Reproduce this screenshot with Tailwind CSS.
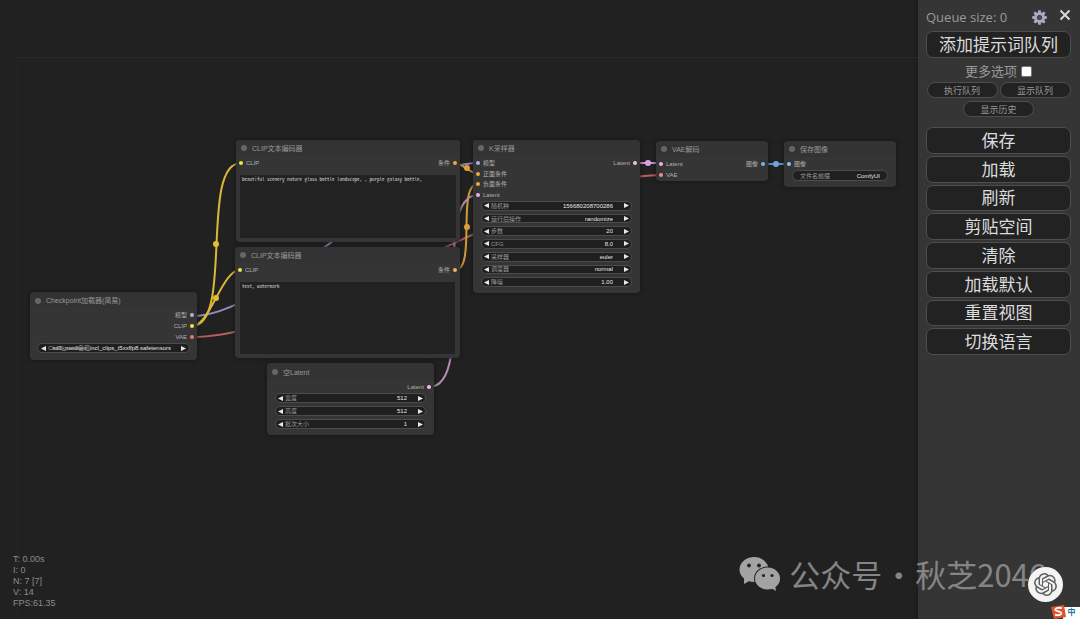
<!DOCTYPE html>
<html lang="zh-CN">
<head>
<meta charset="utf-8">
<title>ComfyUI</title>
<script src="https://cdn.jsdelivr.net/npm/@tailwindcss/browser@4"></script>
</head>
<body class="relative flex min-h-screen overflow-hidden bg-[#212121] font-['Liberation_Sans','Noto_Sans_CJK_SC',sans-serif] text-[#b0b0b0]">

<svg class="hidden">
  <symbol id="prev" viewBox="0 0 6 6"><path d="M6 0v6L0 3z" fill="#e6e6e6"/></symbol>
  <symbol id="next" viewBox="0 0 6 6"><path d="M0 0v6l6-3z" fill="#e6e6e6"/></symbol>
</svg>

<!-- Node graph canvas -->
<main class="relative min-w-0 flex-1 overflow-hidden">
  <div class="absolute top-[57px] right-0 bottom-0 left-[17px] border-t border-l border-t-[#25273a] border-l-[#262626]"></div>

  <svg class="absolute top-0 left-0 h-[619px] w-[919px]" viewBox="0 0 919 619" fill="none" stroke-width="2">
    <path d="M192 316C273 316 397 163 478 163" stroke="#8f8bb8"/>
    <path d="M192 326C234 326 199 163 241 163" stroke="#dcb83a"/>
    <path d="M192 326C210 326 222 270 240 270" stroke="#dcb83a"/>
    <path d="M192 337C316 337 537 175 661 175" stroke="#b5605c"/>
    <path d="M455 163C461 163 472 174 478 174" stroke="#d19a38"/>
    <path d="M455 270C477 270 456 184 478 184" stroke="#d19a38"/>
    <path d="M429 387C479 387 428 195 478 195" stroke="#b58ab5"/>
    <path d="M635 163H661" stroke="#c895d0"/>
    <path d="M763 164H789" stroke="#6294c8"/>
    <circle cx="216" cy="244" r="3" fill="#e3bf31"/>
    <circle cx="216" cy="298" r="3" fill="#e3bf31"/>
    <circle cx="467" cy="168" r="3" fill="#dba03a"/>
    <circle cx="467" cy="227" r="3" fill="#dba03a"/>
    <circle cx="648" cy="163" r="3" fill="#dba0e2"/>
    <circle cx="776" cy="164" r="3" fill="#6fa4da"/>
  </svg>

  <!-- Checkpoint loader -->
  <section class="absolute top-[292px] left-[30px] w-[167px] rounded bg-[#353535] pb-[7px] shadow-[0_0_4px_#141414]">
    <h2 class="flex h-[17px] items-center gap-[5px] rounded-t bg-[#333] pl-[5px] text-[7px] leading-none text-[#999]"><i class="size-[6px] rounded-full bg-[#666]"></i>Checkpoint加载器(简易)</h2>
    <ul class="grid auto-rows-[11px] pr-[3px] text-[6px] leading-none">
      <li class="flex items-center justify-end gap-[3px]">模型<i class="size-[4px] rounded-full bg-[#b4b0dd]"></i></li>
      <li class="flex items-center justify-end gap-[3px]">CLIP<i class="size-[4px] rounded-full bg-[#f5e04a]"></i></li>
      <li class="flex items-center justify-end gap-[3px]">VAE<i class="size-[4px] rounded-full bg-[#e87570]"></i></li>
    </ul>
    <div class="relative mx-[7px] mt-[1px] flex h-[10px] items-center rounded-full border border-[#4b4b4b] bg-[#1f1f1f] px-[3px] text-[6px] leading-none">
      <button type="button" aria-label="上一个"><svg class="size-[5px]"><use href="#prev"/></svg></button>
      <label for="ckpt" class="absolute left-[10px] text-[#999]">Checkpoint名称</label>
      <select id="ckpt" class="min-w-0 flex-1 appearance-none pr-[10px] text-[#e6e6e6] [text-align-last:right]"><option>sd3_medium_incl_clips_t5xxlfp8.safetensors</option></select>
      <button type="button" aria-label="下一个"><svg class="size-[5px]"><use href="#next"/></svg></button>
    </div>
  </section>

  <!-- Positive prompt -->
  <section class="absolute top-[140px] left-[236px] w-[224px] rounded bg-[#353535] pb-[4px] shadow-[0_0_4px_#141414]">
    <h2 class="flex h-[16px] items-center gap-[5px] rounded-t bg-[#333] pl-[5px] text-[7px] leading-none text-[#999]"><i class="size-[6px] rounded-full bg-[#666]"></i>CLIP文本编码器</h2>
    <div class="flex h-[14px] items-center justify-between px-[3px] text-[6px] leading-none">
      <span class="flex items-center gap-[3px]"><i class="size-[4px] rounded-full bg-[#f5e04a]"></i>CLIP</span>
      <span class="flex items-center gap-[3px]">条件<i class="size-[4px] rounded-full bg-[#f0a840]"></i></span>
    </div>
    <textarea aria-label="正向提示词" class="mx-[4px] mt-[5px] block h-[63px] w-[216px] resize-none bg-[#222] px-[2px] py-[1px] font-['Noto_Sans_Mono_CJK_SC','Liberation_Mono',monospace] text-[5px] leading-[6px] text-[#d5d5d5]">beautiful scenery nature glass bottle landscape, , purple galaxy bottle,</textarea>
  </section>

  <!-- Negative prompt -->
  <section class="absolute top-[247px] left-[235px] w-[225px] rounded bg-[#353535] pb-[4px] shadow-[0_0_4px_#141414]">
    <h2 class="flex h-[16px] items-center gap-[5px] rounded-t bg-[#333] pl-[5px] text-[7px] leading-none text-[#999]"><i class="size-[6px] rounded-full bg-[#666]"></i>CLIP文本编码器</h2>
    <div class="flex h-[14px] items-center justify-between px-[3px] text-[6px] leading-none">
      <span class="flex items-center gap-[3px]"><i class="size-[4px] rounded-full bg-[#f5e04a]"></i>CLIP</span>
      <span class="flex items-center gap-[3px]">条件<i class="size-[4px] rounded-full bg-[#f0b060]"></i></span>
    </div>
    <textarea aria-label="反向提示词" class="mx-[5px] mt-[5px] block h-[72px] w-[215px] resize-none bg-[#222] px-[2px] py-[1px] font-['Noto_Sans_Mono_CJK_SC','Liberation_Mono',monospace] text-[5px] leading-[6px] text-[#d5d5d5]">text, watermark</textarea>
  </section>

  <!-- Empty latent -->
  <section class="absolute top-[363px] left-[267px] w-[167px] rounded bg-[#353535] pb-[6px] shadow-[0_0_4px_#141414]">
    <h2 class="flex h-[18px] items-center gap-[5px] rounded-t bg-[#333] pl-[5px] text-[7px] leading-none text-[#999]"><i class="size-[6px] rounded-full bg-[#666]"></i>空Latent</h2>
    <div class="flex h-[12px] items-center justify-end gap-[3px] pr-[3px] text-[6px] leading-none">Latent<i class="size-[4px] rounded-full bg-[#eac0ee]"></i></div>
    <div class="mx-[8px] grid auto-rows-[10px] gap-[3px] text-[6px] leading-none text-[#999]">
      <div class="flex items-center gap-[2px] rounded-full border border-[#4b4b4b] bg-[#1f1f1f] px-[2px]">
        <button type="button" aria-label="减小宽度"><svg class="size-[5px]"><use href="#prev"/></svg></button><label for="w">宽度</label>
        <input id="w" value="512" class="min-w-0 flex-1 pr-[9px] text-right text-[#e6e6e6]"><button type="button" aria-label="增大宽度"><svg class="size-[5px]"><use href="#next"/></svg></button>
      </div>
      <div class="flex items-center gap-[2px] rounded-full border border-[#4b4b4b] bg-[#1f1f1f] px-[2px]">
        <button type="button" aria-label="减小高度"><svg class="size-[5px]"><use href="#prev"/></svg></button><label for="h">高度</label>
        <input id="h" value="512" class="min-w-0 flex-1 pr-[9px] text-right text-[#e6e6e6]"><button type="button" aria-label="增大高度"><svg class="size-[5px]"><use href="#next"/></svg></button>
      </div>
      <div class="flex items-center gap-[2px] rounded-full border border-[#4b4b4b] bg-[#1f1f1f] px-[2px]">
        <button type="button" aria-label="减小批次"><svg class="size-[5px]"><use href="#prev"/></svg></button><label for="b">批次大小</label>
        <input id="b" value="1" class="min-w-0 flex-1 pr-[9px] text-right text-[#e6e6e6]"><button type="button" aria-label="增大批次"><svg class="size-[5px]"><use href="#next"/></svg></button>
      </div>
    </div>
  </section>

  <!-- K sampler -->
  <section class="absolute top-[140px] left-[473px] w-[167px] rounded bg-[#353535] pb-[6px] shadow-[0_0_4px_#141414]">
    <h2 class="flex h-[16px] items-center gap-[5px] rounded-t bg-[#333] pl-[5px] text-[7px] leading-none text-[#999]"><i class="size-[6px] rounded-full bg-[#666]"></i>K采样器</h2>
    <div class="flex justify-between px-[3px] pt-[2px] pb-[1px] text-[6px] leading-none">
      <ul class="grid h-[42px] auto-rows-fr">
        <li class="flex items-center gap-[3px]"><i class="size-[4px] rounded-full bg-[#b4b0dd]"></i>模型</li>
        <li class="flex items-center gap-[3px]"><i class="size-[4px] rounded-full bg-[#f0a840]"></i>正面条件</li>
        <li class="flex items-center gap-[3px]"><i class="size-[4px] rounded-full bg-[#f0a840]"></i>负面条件</li>
        <li class="flex items-center gap-[3px]"><i class="size-[4px] rounded-full bg-[#eab0f0]"></i>Latent</li>
      </ul>
      <div class="flex h-[10px] items-center gap-[3px]">Latent<i class="size-[4px] rounded-full bg-[#eac0ee]"></i></div>
    </div>
    <div class="mx-[8px] grid h-[86px] auto-rows-fr gap-[3px] text-[6px] leading-none text-[#999]">
      <div class="flex items-center gap-[2px] rounded-full border border-[#4b4b4b] bg-[#1f1f1f] px-[2px]">
        <button type="button" aria-label="减小"><svg class="size-[5px]"><use href="#prev"/></svg></button><label for="seed">随机种</label>
        <input id="seed" value="156680208700286" class="min-w-0 flex-1 pr-[9px] text-right text-[#e6e6e6]"><button type="button" aria-label="增大"><svg class="size-[5px]"><use href="#next"/></svg></button>
      </div>
      <div class="flex items-center gap-[2px] rounded-full border border-[#4b4b4b] bg-[#1f1f1f] px-[2px]">
        <button type="button" aria-label="上一个"><svg class="size-[5px]"><use href="#prev"/></svg></button><label for="after">运行后操作</label>
        <select id="after" class="min-w-0 flex-1 appearance-none pr-[9px] text-[#e6e6e6] [text-align-last:right]"><option>randomize</option></select><button type="button" aria-label="下一个"><svg class="size-[5px]"><use href="#next"/></svg></button>
      </div>
      <div class="flex items-center gap-[2px] rounded-full border border-[#4b4b4b] bg-[#1f1f1f] px-[2px]">
        <button type="button" aria-label="减小"><svg class="size-[5px]"><use href="#prev"/></svg></button><label for="steps">步数</label>
        <input id="steps" value="20" class="min-w-0 flex-1 pr-[9px] text-right text-[#e6e6e6]"><button type="button" aria-label="增大"><svg class="size-[5px]"><use href="#next"/></svg></button>
      </div>
      <div class="flex items-center gap-[2px] rounded-full border border-[#4b4b4b] bg-[#1f1f1f] px-[2px]">
        <button type="button" aria-label="减小"><svg class="size-[5px]"><use href="#prev"/></svg></button><label for="cfg">CFG</label>
        <input id="cfg" value="8.0" class="min-w-0 flex-1 pr-[9px] text-right text-[#e6e6e6]"><button type="button" aria-label="增大"><svg class="size-[5px]"><use href="#next"/></svg></button>
      </div>
      <div class="flex items-center gap-[2px] rounded-full border border-[#4b4b4b] bg-[#1f1f1f] px-[2px]">
        <button type="button" aria-label="上一个"><svg class="size-[5px]"><use href="#prev"/></svg></button><label for="sampler">采样器</label>
        <select id="sampler" class="min-w-0 flex-1 appearance-none pr-[9px] text-[#e6e6e6] [text-align-last:right]"><option>euler</option></select><button type="button" aria-label="下一个"><svg class="size-[5px]"><use href="#next"/></svg></button>
      </div>
      <div class="flex items-center gap-[2px] rounded-full border border-[#4b4b4b] bg-[#1f1f1f] px-[2px]">
        <button type="button" aria-label="上一个"><svg class="size-[5px]"><use href="#prev"/></svg></button><label for="sched">调度器</label>
        <select id="sched" class="min-w-0 flex-1 appearance-none pr-[9px] text-[#e6e6e6] [text-align-last:right]"><option>normal</option></select><button type="button" aria-label="下一个"><svg class="size-[5px]"><use href="#next"/></svg></button>
      </div>
      <div class="flex items-center gap-[2px] rounded-full border border-[#4b4b4b] bg-[#1f1f1f] px-[2px]">
        <button type="button" aria-label="减小"><svg class="size-[5px]"><use href="#prev"/></svg></button><label for="denoise">降噪</label>
        <input id="denoise" value="1.00" class="min-w-0 flex-1 pr-[9px] text-right text-[#e6e6e6]"><button type="button" aria-label="增大"><svg class="size-[5px]"><use href="#next"/></svg></button>
      </div>
    </div>
  </section>

  <!-- VAE decode -->
  <section class="absolute top-[141px] left-[656px] w-[112px] rounded bg-[#353535] pb-[1px] shadow-[0_0_4px_#141414]">
    <h2 class="flex h-[16px] items-center gap-[5px] rounded-t bg-[#333] pl-[5px] text-[7px] leading-none text-[#999]"><i class="size-[6px] rounded-full bg-[#666]"></i>VAE解码</h2>
    <div class="flex justify-between px-[3px] pt-[1px] text-[6px] leading-none">
      <ul class="grid auto-rows-[11px]">
        <li class="flex items-center gap-[3px]"><i class="size-[4px] rounded-full bg-[#eab0f0]"></i>Latent</li>
        <li class="flex items-center gap-[3px]"><i class="size-[4px] rounded-full bg-[#ee8f88]"></i>VAE</li>
      </ul>
      <div class="flex h-[11px] items-center gap-[3px]">图像<i class="size-[4px] rounded-full bg-[#7db4ee]"></i></div>
    </div>
  </section>

  <!-- Save image -->
  <section class="absolute top-[141px] left-[784px] w-[112px] rounded bg-[#353535] pb-[6px] shadow-[0_0_4px_#141414]">
    <h2 class="flex h-[16px] items-center gap-[5px] rounded-t bg-[#333] pl-[5px] text-[7px] leading-none text-[#999]"><i class="size-[6px] rounded-full bg-[#666]"></i>保存图像</h2>
    <div class="flex h-[13px] items-center gap-[3px] pt-[1px] pl-[3px] text-[6px] leading-none"><i class="size-[4px] rounded-full bg-[#8fc0f5]"></i>图像</div>
    <div class="mx-[8px] flex h-[11px] items-center rounded-full border border-[#4b4b4b] bg-[#1f1f1f] px-[7px] text-[6px] leading-none text-[#999]">
      <label for="prefix" class="shrink-0">文件名前缀</label><input id="prefix" value="ComfyUI" class="min-w-0 flex-1 text-right text-[#e6e6e6]">
    </div>
  </section>

  <!-- Render statistics -->
  <div class="absolute top-[554px] left-[13px] text-[9px] leading-[11px] text-[#8c8c8c]">
    <p>T: 0.00s</p><p>I: 0</p><p>N: 7 [7]</p><p>V: 14</p><p>FPS:61.35</p>
  </div>
</main>

<!-- Queue menu -->
<aside class="w-[162px] shrink-0 bg-[#353535] pt-[7px] pr-[9px] pl-[8px] font-['Open_Sans','Noto_Sans_CJK_SC',sans-serif] text-[#999] shadow-[0_0_4px_#141414]">
  <div class="flex h-[21px] items-center">
    <span class="flex-1 text-[13px] leading-none whitespace-nowrap">Queue size: 0</span>
    <button type="button" aria-label="设置" class="mr-[12px]">
      <svg class="size-[15px]" viewBox="-8 -8 16 16" fill="#a9a9c4"><path d="M-1.8-4.5-1.3-7.8h2.6l.5 3.3zM-1.8 4.5l.5 3.3h2.6l.5-3.3z"/><path d="M-1.8-4.5-1.3-7.8h2.6l.5 3.3zM-1.8 4.5l.5 3.3h2.6l.5-3.3z" transform="rotate(45)"/><path d="M-1.8-4.5-1.3-7.8h2.6l.5 3.3zM-1.8 4.5l.5 3.3h2.6l.5-3.3z" transform="rotate(90)"/><path d="M-1.8-4.5-1.3-7.8h2.6l.5 3.3zM-1.8 4.5l.5 3.3h2.6l.5-3.3z" transform="rotate(135)"/><circle r="4.2" fill="none" stroke="#a9a9c4" stroke-width="3"/><circle r="2" fill="#4a4a58"/></svg>
    </button>
    <button type="button" aria-label="关闭" class="mb-[5px]"><svg class="size-[12px]" viewBox="0 0 12 12" stroke="#d8d8d8" stroke-width="2"><path d="m1.500 1.500 9 9m0-9-9 9"/></svg></button>
  </div>
  <button type="button" class="mt-[3px] block h-[27px] w-full rounded-[7px] border border-[#4e4e4e] bg-[#222] text-[17px] leading-none text-[#dcdcdc]">添加提示词队列</button>
  <label class="mt-[4px] flex h-[18px] items-center justify-center gap-[4px] text-[13px] leading-none">更多选项<input type="checkbox" class="size-[11px] appearance-none rounded-[2px] border border-[#777] bg-white"></label>
  <div class="mt-[2px] flex flex-wrap justify-center gap-[2px] text-[9px] leading-none">
    <button type="button" class="h-[16px] w-[71px] rounded-full border border-[#4e4e4e] bg-[#222]">执行队列</button>
    <button type="button" class="h-[16px] w-[71px] rounded-full border border-[#4e4e4e] bg-[#222]">显示队列</button>
    <button type="button" class="mt-[1px] h-[16px] w-[71px] rounded-full border border-[#4e4e4e] bg-[#222]">显示历史</button>
  </div>
  <div class="mt-[10px] grid h-[228px] auto-rows-fr gap-[2px] text-[17px] leading-none text-[#dcdcdc]">
    <button type="button" class="rounded-[7px] border border-[#4e4e4e] bg-[#222]">保存</button>
    <button type="button" class="rounded-[7px] border border-[#4e4e4e] bg-[#222]">加载</button>
    <button type="button" class="rounded-[7px] border border-[#4e4e4e] bg-[#222]">刷新</button>
    <button type="button" class="rounded-[7px] border border-[#4e4e4e] bg-[#222]">剪贴空间</button>
    <button type="button" class="rounded-[7px] border border-[#4e4e4e] bg-[#222]">清除</button>
    <button type="button" class="rounded-[7px] border border-[#4e4e4e] bg-[#222]">加载默认</button>
    <button type="button" class="rounded-[7px] border border-[#4e4e4e] bg-[#222]">重置视图</button>
    <button type="button" class="rounded-[7px] border border-[#4e4e4e] bg-[#222]">切换语言</button>
  </div>
</aside>

<!-- Account watermark -->
<div class="absolute right-[34px] bottom-[23px] flex items-center font-['Noto_Sans_CJK_SC',sans-serif] text-[31px] leading-[44px] font-normal whitespace-nowrap text-[#858585]">
  <svg class="mr-[8px] h-[36px] w-[42px]" viewBox="0 0 42 36"><ellipse cx="15" cy="13.500" rx="14.500" ry="12.500" fill="#a3a3a3"/><path d="m5 22 0 6 7-4z" fill="#a3a3a3"/><ellipse cx="28.500" cy="22.500" rx="13.500" ry="12" fill="#232323"/><ellipse cx="28.500" cy="22.500" rx="12.500" ry="11" fill="#a3a3a3"/><path d="m32 32 5 3-1-6z" fill="#a3a3a3"/><g fill="#232323"><circle cx="10" cy="9.500" r="1.900"/><circle cx="20" cy="9.500" r="1.900"/><circle cx="24.500" cy="19.500" r="1.600"/><circle cx="33" cy="19.500" r="1.600"/></g></svg>
  <span>公众号</span><span class="w-[33px] text-center">·</span><span>秋芝2046</span>
</div>

<!-- Assistant button -->
<button type="button" aria-label="ChatGPT" class="absolute right-[17px] bottom-[17px] flex size-[35px] items-center justify-center rounded-full bg-[#f4f4f4]">
  <svg class="size-[23px]" viewBox="0 0 24 24" fill="#606060"><path d="M22.2819 9.8211a5.9847 5.9847 0 0 0-.5157-4.9108 6.0462 6.0462 0 0 0-6.5098-2.9A6.0651 6.0651 0 0 0 4.9807 4.1818a5.9847 5.9847 0 0 0-3.9977 2.9 6.0462 6.0462 0 0 0 .7427 7.0966 5.98 5.98 0 0 0 .511 4.9107 6.051 6.051 0 0 0 6.5146 2.9001A5.9847 5.9847 0 0 0 13.2599 24a6.0557 6.0557 0 0 0 5.7718-4.2058 5.9894 5.9894 0 0 0 3.9977-2.9001 6.0557 6.0557 0 0 0-.7475-7.0729zm-9.022 12.6081a4.4755 4.4755 0 0 1-2.8764-1.0408l.1419-.0804 4.7783-2.7582a.7948.7948 0 0 0 .3927-.6813v-6.7369l2.02 1.1686a.071.071 0 0 1 .038.052v5.5826a4.504 4.504 0 0 1-4.4945 4.4944zm-9.6607-4.1254a4.4708 4.4708 0 0 1-.5346-3.0137l.142.0852 4.783 2.7582a.7712.7712 0 0 0 .7806 0l5.8428-3.3685v2.3324a.0804.0804 0 0 1-.0332.0615L9.74 19.9502a4.4992 4.4992 0 0 1-6.1408-1.6464zM2.3408 7.8956a4.485 4.485 0 0 1 2.3655-1.9728V11.6a.7664.7664 0 0 0 .3879.6765l5.8144 3.3543-2.0201 1.1685a.0757.0757 0 0 1-.071 0l-4.8303-2.7865A4.504 4.504 0 0 1 2.3408 7.872zm16.5963 3.8558L13.1038 8.364 15.1192 7.2a.0757.0757 0 0 1 .071 0l4.8303 2.7913a4.4944 4.4944 0 0 1-.6765 8.1042v-5.6772a.79.79 0 0 0-.407-.667zm2.0107-3.0231l-.142-.0852-4.7735-2.7818a.7759.7759 0 0 0-.7854 0L9.409 9.2297V6.8974a.0662.0662 0 0 1 .0284-.0615l4.8303-2.7866a4.4992 4.4992 0 0 1 6.6802 4.66zM8.3065 12.863l-2.02-1.1638a.0804.0804 0 0 1-.038-.0567V6.0742a4.4992 4.4992 0 0 1 7.3757-3.4537l-.142.0805L8.704 5.459a.7948.7948 0 0 0-.3927.6813zm1.0976-2.3654l2.602-1.4998 2.6069 1.4998v2.9994l-2.5974 1.4997-2.6067-1.4997Z"/></svg>
</button>

<!-- Input method indicator -->
<div class="absolute right-0 bottom-0 flex items-end">
  <svg class="z-10 -mr-[3px] h-[14px] w-[16px]" viewBox="0 0 16 14"><path d="M1 2 14 0l2 12-12 2z" fill="#e2532b"/><path d="M12 3.200C9 2.300 5.500 2.800 5.300 4.700s6.200 1.300 6.100 3.500c-.1 1.900-3.800 2.500-6.400 1.500" fill="none" stroke="#fff" stroke-width="1.800"/></svg>
  <span class="flex h-[12px] w-[17px] items-center justify-center bg-white text-[8px] leading-none font-bold text-[#1f7299]">中</span>
</div>
</body>
</html>
